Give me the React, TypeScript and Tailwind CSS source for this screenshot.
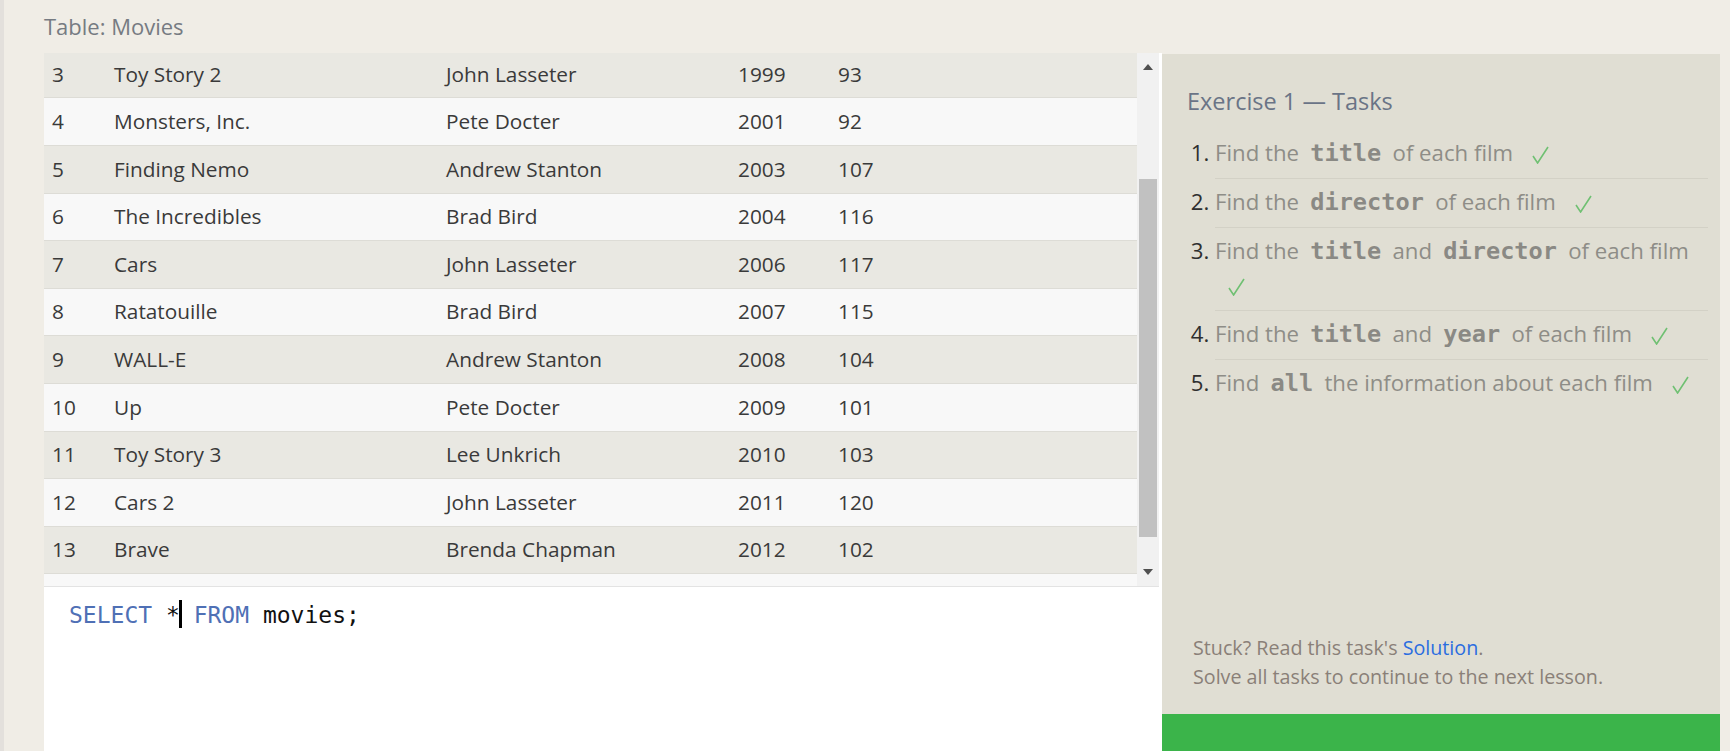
import React from 'react';

const movies: [number, string, string, number, number][] = [
  [3, 'Toy Story 2', 'John Lasseter', 1999, 93],
  [4, 'Monsters, Inc.', 'Pete Docter', 2001, 92],
  [5, 'Finding Nemo', 'Andrew Stanton', 2003, 107],
  [6, 'The Incredibles', 'Brad Bird', 2004, 116],
  [7, 'Cars', 'John Lasseter', 2006, 117],
  [8, 'Ratatouille', 'Brad Bird', 2007, 115],
  [9, 'WALL-E', 'Andrew Stanton', 2008, 104],
  [10, 'Up', 'Pete Docter', 2009, 101],
  [11, 'Toy Story 3', 'Lee Unkrich', 2010, 103],
  [12, 'Cars 2', 'John Lasseter', 2011, 120],
  [13, 'Brave', 'Brenda Chapman', 2012, 102],
  [14, 'Monsters University', 'Dan Scanlon', 2013, 110],
];

const Code = ({ children }: { children: React.ReactNode }) => (
  <code className="font-['DejaVu_Sans_Mono',monospace] font-bold text-[23.6px] leading-none px-[5.5px] text-[#8a8984]">
    {children}
  </code>
);

const Check = () => (
  <svg width="17" height="18" viewBox="0 0 17 18" className="inline-block ml-[13px]">
    <path d="M1 10 L5.6 17 L16 1" stroke="#6fc072" strokeWidth="1.6" fill="none" />
  </svg>
);

const Arrow = ({ down }: { down?: boolean }) => (
  <svg width="10" height="6" viewBox="0 0 10 6">
    <polygon points={down ? '0,0 10,0 5,6' : '0,6 10,6 5,0'} fill="#505050" />
  </svg>
);

export default function App() {
  return (
    <div className="w-[1730px] h-[751px] overflow-hidden bg-[#f0ede6] flex font-['Open_Sans','Noto_Sans',sans-serif]">
      <div className="w-[4px] bg-[#e3e0dc]" />
      <div className="flex-1 flex flex-col pl-[40px] pr-[10px]">
        <div className="h-[53px] pt-[11px] text-[22px] leading-[30px] text-[#767b82]">Table: Movies</div>

        <div className="flex flex-1 min-h-0">
          {/* table + editor */}
          <div className="w-[1118px] flex flex-col bg-white">
            <div className="h-[534px] flex border-b border-[#e3e3e3] mr-[3px]">
              <div className="flex-1 overflow-hidden">
                <div className="-mt-[2.2px]">
                  {movies.map(([id, title, director, year, length], i) => (
                    <div
                      key={id}
                      className={`grid grid-cols-[62px_332px_292px_100px_1fr] h-[47.6px] items-center border-b border-[#dddcd6] text-[20.8px] text-[#3a3a3a] ${
                        i % 2 === 0 ? 'bg-[#e9e8e2]' : 'bg-[#f8f8f8]'
                      }`}
                    >
                      <div className="pl-[8px]">{id}</div>
                      <div className="pl-[8px]">{title}</div>
                      <div className="pl-[8px]">{director}</div>
                      <div className="pl-[8px]">{year}</div>
                      <div className="pl-[8px]">{length}</div>
                    </div>
                  ))}
                </div>
              </div>
              <div className="w-[22px] bg-[#f1f1f1] flex flex-col items-center">
                <div className="mt-[11px] flex">
                  <Arrow />
                </div>
                <div className="mt-[109px] w-[18px] h-[358px] bg-[#c1c1c1]" />
                <div className="mt-[32px] flex">
                  <Arrow down />
                </div>
              </div>
            </div>

            <div className="flex-1 pl-[25px] pt-[13px] font-['DejaVu_Sans_Mono',monospace] text-[23px] leading-[30px] text-[#111]">
              <span className="text-[#4f70b5]">SELECT</span> *
              <span className="inline-block w-[3px] h-[28px] bg-black align-[-5px] -ml-[1px] -mr-[2px]" />
              {' '}
              <span className="text-[#4f70b5]">FROM</span> movies;
            </div>
          </div>

          {/* tasks panel */}
          <div className="w-[558px] mt-[1px] bg-[#e0ded3] flex flex-col">
            <div className="pl-[25px] pt-[31px] text-[23.5px] leading-[32px] text-[#6a7486]">Exercise 1 — Tasks</div>
            <ol className="list-decimal mt-[13px] ml-[25px] pl-[28px] pr-[12px] text-[22.2px] text-[#8e8d87]">
              <li className="pt-[6px] pb-[8px] leading-[34px] border-b border-[#d3d1c6] marker:text-[#2f2f2f]">
                Find the <Code>title</Code> of each film <Check />
              </li>
              <li className="pt-[6px] pb-[8px] leading-[34px] border-b border-[#d3d1c6] marker:text-[#2f2f2f]">
                Find the <Code>director</Code> of each film <Check />
              </li>
              <li className="pt-[6px] pb-[8px] leading-[34px] border-b border-[#d3d1c6] marker:text-[#2f2f2f]">
                Find the <Code>title</Code> and <Code>director</Code> of each film <Check />
              </li>
              <li className="pt-[6px] pb-[8px] leading-[34px] border-b border-[#d3d1c6] marker:text-[#2f2f2f]">
                Find the <Code>title</Code> and <Code>year</Code> of each film <Check />
              </li>
              <li className="pt-[6px] pb-[8px] leading-[34px] marker:text-[#2f2f2f]">
                Find <Code>all</Code> the information about each film <Check />
              </li>
            </ol>
            <div className="flex-1" />
            <div className="pl-[31px] mb-[23px] text-[19.7px] leading-[29px] text-[#8a8078]">
              <div>
                Stuck? Read this task's <span className="text-[#2b6de0]">Solution</span>.
              </div>
              <div>Solve all tasks to continue to the next lesson.</div>
            </div>
            <div className="h-[37px] bg-[#3bb44a]" />
          </div>
        </div>
      </div>
    </div>
  );
}
